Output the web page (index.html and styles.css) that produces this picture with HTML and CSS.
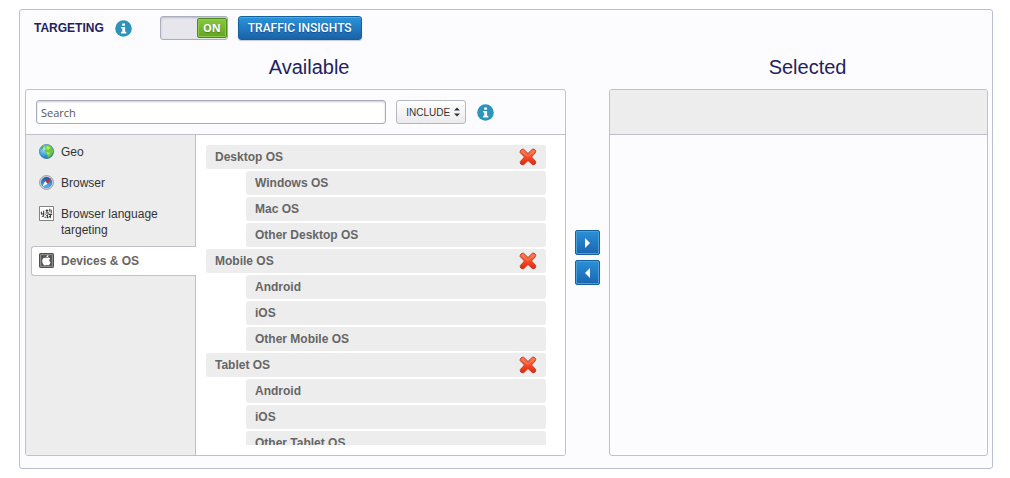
FILE: index.html
```html
<!DOCTYPE html>
<html lang="en">
<head>
<meta charset="utf-8">
<title>Targeting</title>
<link rel="stylesheet" href="styles.css">
</head>
<body>
<svg class="defs" aria-hidden="true">
  <defs>
    <linearGradient id="red" x1="0" y1="0" x2="0" y2="1"><stop offset="0" stop-color="#ff7a50"/><stop offset="1" stop-color="#f02000"/></linearGradient>
    <radialGradient id="sea" cx=".35" cy=".3" r=".8"><stop offset="0" stop-color="#a5e2fa"/><stop offset=".6" stop-color="#3a9dd8"/><stop offset="1" stop-color="#1a62a8"/></radialGradient>
    <linearGradient id="dial" x1="0" y1="0" x2="0" y2="1"><stop offset="0" stop-color="#1c4f9c"/><stop offset="1" stop-color="#58c0f4"/></linearGradient>
    <symbol id="info" viewBox="0 0 17 17"><circle cx="8.5" cy="8.5" r="8.3" fill="#2e93b8"/><path fill="#fff" d="M7.2 3.500h2.800v2.300H7.200zM6.200 7h3.900v4.800h1.200v1.600H6.100v-1.600h1.200V8.500H6.200z"/></symbol>
    <symbol id="cross" viewBox="0 0 18 18"><path fill="url(#red)" stroke="#b03a28" stroke-width=".9" stroke-linejoin="round" d="M4.600 1.200 9 5.500l4.400-4.300q2-.4 3 1.100.7 1.300 0 2.300L12.500 9l4.100 4.300q.4 1.900-.8 3-1.200.8-2.500.3L9 12.500l-4.300 4.200q-1.800.4-3-.7-.8-1.200-.3-2.600L5.500 9 1.200 4.700q-.3-1.700.8-2.700 1-1 2.600-.8z"/><path d="M3 3.200l6 5.300 5.800-5.300" fill="none" stroke="#ffab88" stroke-width="1" opacity=".5"/></symbol>
  </defs>
</svg>
<main class="targeting">
  <header class="toolbar">
    <h1 class="toolbar-title">TARGETING</h1>
    <svg class="info" role="img" aria-label="Information"><use href="#info"/></svg>
    <label class="switch">
      <input class="switch-input" type="checkbox" checked aria-label="Targeting">
      <span class="switch-knob">ON</span>
    </label>
    <button class="insights" type="button">TRAFFIC INSIGHTS</button>
  </header>
  <div class="picker">
    <section class="column">
      <h2 class="column-title column-title-available">Available</h2>
      <div class="panel">
        <div class="panel-head">
          <input class="search" type="text" placeholder="Search" aria-label="Search">
          <div class="mode">
            <select class="mode-select" aria-label="Mode"><option>INCLUDE</option></select>
            <svg class="mode-arrows" viewBox="0 0 6 10" aria-hidden="true"><path fill="#333" d="M0 3.500 3 .500l3 3zM0 6.500h6l-3 3z"/></svg>
          </div>
          <svg class="info" role="img" aria-label="Information"><use href="#info"/></svg>
        </div>
        <div class="browse">
          <nav class="tabs" aria-label="Categories">
            <a class="tab" href="#geo">
              <svg class="tab-icon" viewBox="0 0 16 16" aria-hidden="true"><circle cx="8" cy="8" r="7.600" fill="url(#sea)" stroke="#2f79ac" stroke-width=".7"/><path fill="#6cc83c" d="M6 1.200 10 .8l3.500 2.500 1.500 3.500-.5 3-2 2.700-1.500 1.500-1.700.3-.5-3.300-2.300-2-.5-2.200 1.500-1.500-1-1.500z"/><path fill="#c0ea5c" d="M8 2l3 .8 1 2-2.500 1.500-1.500-1.500zM8 8.500l3 .5-.5 2.500-1.500-.5z"/><path fill="#4faf3f" d="M2 4l2-2 1 .5-1 2.500-2.300 1.500z"/></svg>
              <span>Geo</span>
            </a>
            <a class="tab" href="#browser">
              <svg class="tab-icon" viewBox="0 0 16 16" aria-hidden="true"><circle cx="8" cy="8" r="7.400" fill="#e1e5ea" stroke="#868c94" stroke-width=".9"/><circle cx="8" cy="8" r="5.800" fill="url(#dial)" stroke="#335f98" stroke-width=".5"/><path fill="#fff" d="M3.500 12.500 6.600 6.500l2.800 2.900z"/><path fill="#dc2030" d="M12.600 3.300 6.600 6.500l2.800 2.900z"/></svg>
              <span>Browser</span>
            </a>
            <a class="tab" href="#language">
              <svg class="tab-icon" viewBox="0 0 16 16" aria-hidden="true"><path fill="#fff" stroke="#777" d="M.5.500h15v15H.500z"/><path fill="none" stroke="#222" stroke-width="1" d="M2.500 6v3M2.500 8.500h3M5 5v6M7 5h3M8.500 3.500V7M7 7.500h4M11.500 3v3M13 4v4M10 9h4M12 9v4M7 9l1.500 1.500M9 9v4M6 12h2M10 12l3-1.500M3 11h2"/></svg>
              <span>Browser language targeting</span>
            </a>
            <a class="tab tab-active" href="#devices" aria-current="page">
              <svg class="tab-icon" viewBox="0 0 16 16" aria-hidden="true"><rect x=".5" y=".5" width="15" height="15" rx="1" fill="#555" stroke="#444"/><path fill="none" stroke="#aaa" stroke-width=".8" d="M1.700 1.700h12.600v12.600H1.700z"/><path fill="#fff" d="M8 5.300c1-.6 3-.9 4 .6-1.400 1-1.300 3.300.3 4-.6 1.700-1.600 3.300-2.600 3.300-.8 0-1-.4-1.700-.4s-1 .4-1.700.4c-1.400 0-2.900-2.500-2.900-4.700C3.400 5.400 6 4.300 8 5.300zM7.800 4.600c0-1.500 1-2.500 2.300-2.600.1 1.400-1 2.600-2.300 2.600z"/></svg>
              <span>Devices &amp; OS</span>
            </a>
          </nav>
          <div class="list-wrap">
            <ul class="list">
              <li class="row">Desktop OS<button class="remove" type="button" aria-label="Remove Desktop OS"><svg class="cross"><use href="#cross"/></svg></button></li>
              <li class="row row-child">Windows OS</li>
              <li class="row row-child">Mac OS</li>
              <li class="row row-child">Other Desktop OS</li>
              <li class="row">Mobile OS<button class="remove" type="button" aria-label="Remove Mobile OS"><svg class="cross"><use href="#cross"/></svg></button></li>
              <li class="row row-child">Android</li>
              <li class="row row-child">iOS</li>
              <li class="row row-child">Other Mobile OS</li>
              <li class="row">Tablet OS<button class="remove" type="button" aria-label="Remove Tablet OS"><svg class="cross"><use href="#cross"/></svg></button></li>
              <li class="row row-child">Android</li>
              <li class="row row-child">iOS</li>
              <li class="row row-child">Other Tablet OS</li>
            </ul>
          </div>
        </div>
      </div>
    </section>
    <div class="movers">
      <button class="mover" type="button" aria-label="Add"><svg class="mover-icon" viewBox="0 0 6 10"><path fill="#fff" d="M0 0l5 5-5 5z"/></svg></button>
      <button class="mover" type="button" aria-label="Take back"><svg class="mover-icon" viewBox="0 0 6 10"><path fill="#fff" d="M5 0 0 5l5 5z"/></svg></button>
    </div>
    <section class="column">
      <h2 class="column-title column-title-selected">Selected</h2>
      <div class="panel panel-selected">
        <div class="panel-head panel-head-empty"></div>
      </div>
    </section>
  </div>
</main>
</body>
</html>
```

FILE: styles.css
```css
* {
  box-sizing: border-box;
}

body {
  margin: 0;
  padding: 9px 17px 9px 19px;
  background: #fff;
  color: #333;
  font: 12px/16px "Liberation Sans", Arial, sans-serif;
}

button,
input,
select {
  margin: 0;
  font-family: inherit;
}

.defs {
  position: absolute;
  width: 0;
  height: 0;
}

.targeting {
  padding: 0 4px 12px 5px;
  border: 1px solid #b9bfd2;
  border-radius: 3px;
  background: #fcfcff;
}

.toolbar {
  display: flex;
  align-items: center;
  padding: 6px 0 19px 9px;
}

.toolbar-title {
  margin: 0 11px 0 0;
  color: #1f2260;
  font-size: 12px;
  line-height: 24px;
}

.info {
  flex: none;
  width: 17px;
  height: 17px;
}

.switch {
  display: flex;
  justify-content: flex-end;
  width: 68px;
  height: 24px;
  margin: 0 10px 0 28px;
  padding: 1px 0;
  border: 1px solid #a9adbd;
  border-radius: 3px;
  background: #e6e6ec;
  box-shadow: inset 0 1px 2px #b9bdcb;
}

.switch-input {
  position: absolute;
  opacity: 0;
}

.switch-knob {
  width: 30px;
  border: 1px solid #4c8c1c;
  border-radius: 2px;
  background: linear-gradient(#8cc63f, #62a420);
  box-shadow: inset 0 0 0 1px #8cca48;
  color: #fff;
  font: 700 11px/18px "Open Sans", sans-serif;
  text-align: center;
  text-shadow: 0 1px 1px #4a7d1a;
}

.insights {
  height: 24px;
  padding: 0 9px;
  border: 1px solid #12619f;
  border-radius: 3px;
  background: linear-gradient(#2b94dc, #1a62a8);
  box-shadow: inset 0 1px 0 #4eaae4, 0 1px 1px #c4cbd8;
  color: #fff;
  font: 500 12px/20px Roboto, sans-serif;
  text-shadow: 0 1px 1px #12508a;
}

.picker {
  display: grid;
  grid-template-columns: minmax(0, 10fr) 43px minmax(0, 7fr);
}

.column {
  display: flex;
  flex-direction: column;
}

.column-title {
  margin: 0;
  color: #1f2260;
  font-size: 20px;
  font-weight: 400;
  line-height: 16px;
  padding-bottom: 14px;
  text-align: center;
}

.column-title-available {
  padding-left: 27px;
}

.column-title-selected {
  padding-left: 18px;
}

.panel {
  flex: 1;
  overflow: hidden;
  border: 1px solid #bfc0ca;
  border-radius: 3px;
}

.panel-head {
  display: flex;
  align-items: center;
  height: 45px;
  padding: 0 71px 0 10px;
  border-bottom: 1px solid #bfc0ca;
}

.panel-head-empty {
  background: #ededed;
}

.search {
  flex: 1;
  min-width: 0;
  height: 24px;
  margin-right: 10px;
  padding: 0 4px;
  border: 1px solid #a9abbb;
  border-radius: 3px;
  background: #fff;
  box-shadow: inset 0 1px 2px #c8cad6;
  font: 11px/16px "Open Sans", sans-serif;
}

.search::placeholder {
  color: #555;
  opacity: 1;
}

.mode {
  position: relative;
  margin-right: 11px;
}

.mode-select {
  display: block;
  width: 70px;
  height: 24px;
  padding: 0 0 0 9px;
  appearance: none;
  border: 1px solid #b5b7c3;
  border-radius: 3px;
  background: linear-gradient(#fff, #ebebee);
  color: #333;
  font-size: 10px;
}

.mode-arrows {
  position: absolute;
  top: 7px;
  right: 6px;
  width: 6px;
  height: 10px;
  pointer-events: none;
}

.browse {
  display: flex;
}

.tabs {
  width: 170px;
  padding: 2px 0 0 5px;
  border-right: 1px solid #bfc0ca;
  background: #ededed;
}

.tab {
  display: flex;
  gap: 7px;
  margin: 0 -1px 1px 0;
  padding: 6px 30px 6px 7px;
  border: 1px solid transparent;
  border-right: 0;
  border-radius: 3px 0 0 3px;
  color: #333;
  text-decoration: none;
}

.tab-active {
  border-color: #bfc0ca;
  background: #fff;
  color: #666;
  font-weight: 700;
}

.tab-icon {
  flex: none;
  width: 15px;
  height: 15px;
}

.list-wrap {
  flex: 1;
  padding: 10px 19px 10px 10px;
  background: #fff;
}

.list {
  height: 300px;
  margin: 0;
  padding: 0;
  overflow: hidden;
  list-style: none;
}

.row {
  display: flex;
  align-items: center;
  justify-content: space-between;
  height: 24px;
  margin-bottom: 2px;
  padding: 0 9px;
  border-radius: 3px;
  background: #ededed;
  color: #666;
  font-weight: 700;
}

.row-child {
  margin-left: 40px;
}

.remove {
  display: flex;
  padding: 0;
  border: 0;
  background: none;
}

.cross {
  width: 18px;
  height: 18px;
}

.movers {
  display: flex;
  flex-direction: column;
  align-items: center;
  justify-content: center;
  gap: 5px;
}

.mover {
  display: flex;
  align-items: center;
  justify-content: center;
  width: 25px;
  height: 25px;
  padding: 0;
  border: 1px solid #12609c;
  border-radius: 2px;
  background: linear-gradient(#2a90d8, #1b66ae);
  box-shadow: inset 0 0 0 1px #479fdc;
}

.mover-icon {
  width: 6px;
  height: 10px;
}
```
